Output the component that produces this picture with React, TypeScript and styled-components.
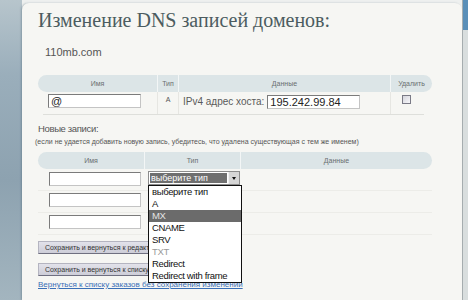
import styled, { createGlobalStyle } from 'styled-components'

const GlobalStyle = createGlobalStyle`
  html, body {
    margin: 0;
    padding: 0;
  }
  body {
    width: 468px;
    height: 300px;
    overflow: hidden;
    background: #eef0ef;
    font-family: 'Liberation Sans', Arial, sans-serif;
  }
`

const sans = `'Liberation Sans', Arial, sans-serif`

const Page = styled.div`
  display: flex;
  width: 468px;
  height: 300px;
  background: #eef0ef;
`

const Backdrop = styled.div`
  flex: none;
  width: 22px;
  background: linear-gradient(180deg, #b7c5cc 0%, #9aaebb 25%, #8da2b0 60%, #a3b5bf 100%);
`

const Panel = styled.main`
  flex: 1;
  margin-top: 3px;
  padding: 5px 0 0 16px;
  background: #f6f6f3;
  border-radius: 7px 7px 0 0;
  box-shadow: -1px 0 2px rgba(70, 95, 110, 0.35);
`

const SideEdge = styled.div`
  flex: none;
  width: 5px;
  border-left: 1px solid #a6adaf;
  background: linear-gradient(180deg, #5a8fb8 0, #5a8fb8 30px, #d9dede 30px);
`

const Title = styled.h1`
  margin: 0;
  font-family: 'Liberation Serif', 'Times New Roman', serif;
  font-weight: normal;
  font-size: 20px;
  line-height: 24px;
  color: #4c5c60;
`

const Domain = styled.div`
  margin: 14px 0 0 7px;
  font-family: ${sans};
  font-size: 11px;
  line-height: 13px;
  color: #555;
`

const Table = styled.section<{ $top: number }>`
  width: 394px;
  margin-top: ${(p) => p.$top}px;
`

const HeadRow = styled.div<{ $cols: string }>`
  display: grid;
  grid-template-columns: ${(p) => p.$cols};
  height: 17px;
  background: #dce5e7;
  border-radius: 9px;
`

const HeadCell = styled.div`
  font-size: 7px;
  line-height: 17px;
  color: #6a6f70;
  text-align: center;
  & + & {
    border-left: 1px solid #f3f6f6;
  }
`

const BodyRow = styled.div<{ $cols: string; $inset?: boolean }>`
  display: grid;
  grid-template-columns: ${(p) => p.$cols};
  height: ${(p) => (p.$inset ? 22 : 21)}px;
  margin: ${(p) => (p.$inset ? '0 8px 0 5px' : '0')};
  border-bottom: 1px solid ${(p) => (p.$inset ? '#dedfdb' : '#ecece8')};
`

const Cell = styled.div<{ $pl?: number; $pt?: number; $sep?: boolean }>`
  position: relative;
  display: flex;
  align-items: flex-start;
  padding: ${(p) => p.$pt ?? 2}px 0 0 ${(p) => p.$pl ?? 0}px;
  border-left: ${(p) => (p.$sep ? '1px solid #e6e6e2' : 'none')};
`

const TextInput = styled.div<{ $w: number }>`
  box-sizing: border-box;
  width: ${(p) => p.$w}px;
  height: 14px;
  padding: 0 2px;
  background: #fff;
  border: 1px solid;
  border-color: #7b7b7b #c4c4c4 #c4c4c4 #7b7b7b;
  font-family: ${sans};
  font-size: 11px;
  line-height: 12px;
  color: #222;
`

const TypeLetter = styled.span`
  width: 100%;
  padding-top: 2px;
  font-size: 7px;
  color: #555;
  text-align: center;
`

const FieldLabel = styled.span`
  margin-right: 3px;
  font-family: ${sans};
  font-size: 10px;
  line-height: 13px;
  color: #5a5a5a;
`

const Checkbox = styled.span`
  display: block;
  width: 7px;
  height: 7px;
  border: 1px solid #7a7a86;
  background: linear-gradient(135deg, #d4d4dc, #f7f7fa);
`

const SectionLabel = styled.div`
  margin: 8px 0 0;
  font-family: ${sans};
  font-size: 9.5px;
  letter-spacing: -0.35px;
  line-height: 12px;
  color: #555;
`

const Hint = styled.div`
  margin: 2px 0 0 -3px;
  font-size: 7px;
  line-height: 9px;
  color: #555;
  white-space: nowrap;
`

const SelectBox = styled.div`
  box-sizing: border-box;
  display: flex;
  width: 92px;
  height: 14px;
  border: 1px solid #8c8c8c;
  background: #fff;
`

const SelectValue = styled.span`
  flex: 1;
  margin: 1px;
  padding-left: 1px;
  background: #6f6f6f;
  color: #fff;
  font-family: ${sans};
  font-size: 9px;
  line-height: 10px;
`

const SelectArrow = styled.span`
  display: flex;
  align-items: center;
  justify-content: center;
  width: 10px;
  background: #d6d6d6;
  border-left: 1px solid #f0f0f0;
  &::after {
    content: '';
    border: 2px solid transparent;
    border-top: 3px solid #111;
    border-bottom: 0;
    margin-top: 1px;
  }
`

const DropList = styled.ul`
  position: absolute;
  top: 16px;
  left: 4px;
  z-index: 2;
  width: 92px;
  margin: 0;
  padding: 0;
  list-style: none;
  background: #fff;
  border: 1px solid #111;
`

const DropItem = styled.li<{ $active?: boolean; $muted?: boolean }>`
  height: 12px;
  padding-left: 3px;
  font-family: ${sans};
  font-size: 9.5px;
  letter-spacing: -0.35px;
  line-height: 12px;
  white-space: nowrap;
  background: ${(p) => (p.$active ? '#6b6b6b' : 'transparent')};
  color: ${(p) => (p.$active ? '#e4e4e4' : p.$muted ? '#9a9a9a' : '#111')};
`

const ActionButton = styled.button<{ $top: number }>`
  display: block;
  box-sizing: border-box;
  height: 13px;
  margin-top: ${(p) => p.$top}px;
  padding: 0 6px;
  font-family: ${sans};
  font-size: 7px;
  line-height: 11px;
  color: #333;
  background: linear-gradient(180deg, #e2e2ea, #cdcdd8);
  border: 1px solid;
  border-color: #b4b4c0 #6f6f80 #6f6f80 #b4b4c0;
  white-space: nowrap;
`

const BackLink = styled.a`
  display: block;
  margin-top: 4px;
  font-size: 8px;
  line-height: 10px;
  color: #3a6fb7;
  text-decoration: underline;
`

const oldCols = '119px 21px 212px 42px'
const oldBodyCols = '114px 21px 212px 34px'
const newCols = '106px 96px 192px'

const types = ['выберите тип', 'A', 'MX', 'CNAME', 'SRV', 'TXT', 'Redirect', 'Redirect with frame']

export default function App() {
  return (
    <>
      <GlobalStyle />
      <Page>
        <Backdrop />
        <Panel>
          <Title>Изменение DNS записей доменов:</Title>
          <Domain>110mb.com</Domain>

          <Table $top={16}>
            <HeadRow $cols={oldCols}>
              <HeadCell>Имя</HeadCell>
              <HeadCell>Тип</HeadCell>
              <HeadCell>Данные</HeadCell>
              <HeadCell>Удалить</HeadCell>
            </HeadRow>
            <BodyRow $cols={oldBodyCols} $inset>
              <Cell $pl={5}>
                <TextInput $w={93}>@</TextInput>
              </Cell>
              <Cell $sep>
                <TypeLetter>A</TypeLetter>
              </Cell>
              <Cell $sep $pl={4} $pt={3}>
                <FieldLabel>IPv4 адрес хоста:</FieldLabel>
                <TextInput $w={93}>195.242.99.84</TextInput>
              </Cell>
              <Cell $sep $pl={11} $pt={3}>
                <Checkbox />
              </Cell>
            </BodyRow>
          </Table>

          <SectionLabel>Новые записи:</SectionLabel>
          <Hint>(если не удается добавить новую запись, убедитесь, что удалена существующая с тем же именем)</Hint>

          <Table $top={6}>
            <HeadRow $cols={newCols}>
              <HeadCell>Имя</HeadCell>
              <HeadCell>Тип</HeadCell>
              <HeadCell>Данные</HeadCell>
            </HeadRow>
            {[0, 1, 2].map((i) => (
              <BodyRow key={i} $cols={newCols}>
                <Cell $pl={11} $pt={i === 0 ? 3 : 2}>
                  <TextInput $w={92} />
                </Cell>
                <Cell $pl={4} $pt={2}>
                  {i === 0 && (
                    <>
                      <SelectBox>
                        <SelectValue>выберите тип</SelectValue>
                        <SelectArrow />
                      </SelectBox>
                      <DropList>
                        {types.map((t) => (
                          <DropItem key={t} $active={t === 'MX'} $muted={t === 'TXT'}>
                            {t}
                          </DropItem>
                        ))}
                      </DropList>
                    </>
                  )}
                </Cell>
                <Cell />
              </BodyRow>
            ))}
          </Table>

          <ActionButton $top={6}>Сохранить и вернуться к редактированию</ActionButton>
          <ActionButton $top={9}>Сохранить и вернуться к списку заказов</ActionButton>
          <BackLink href="#">Вернуться к списку заказов без сохранения изменений</BackLink>
        </Panel>
        <SideEdge />
      </Page>
    </>
  )
}
